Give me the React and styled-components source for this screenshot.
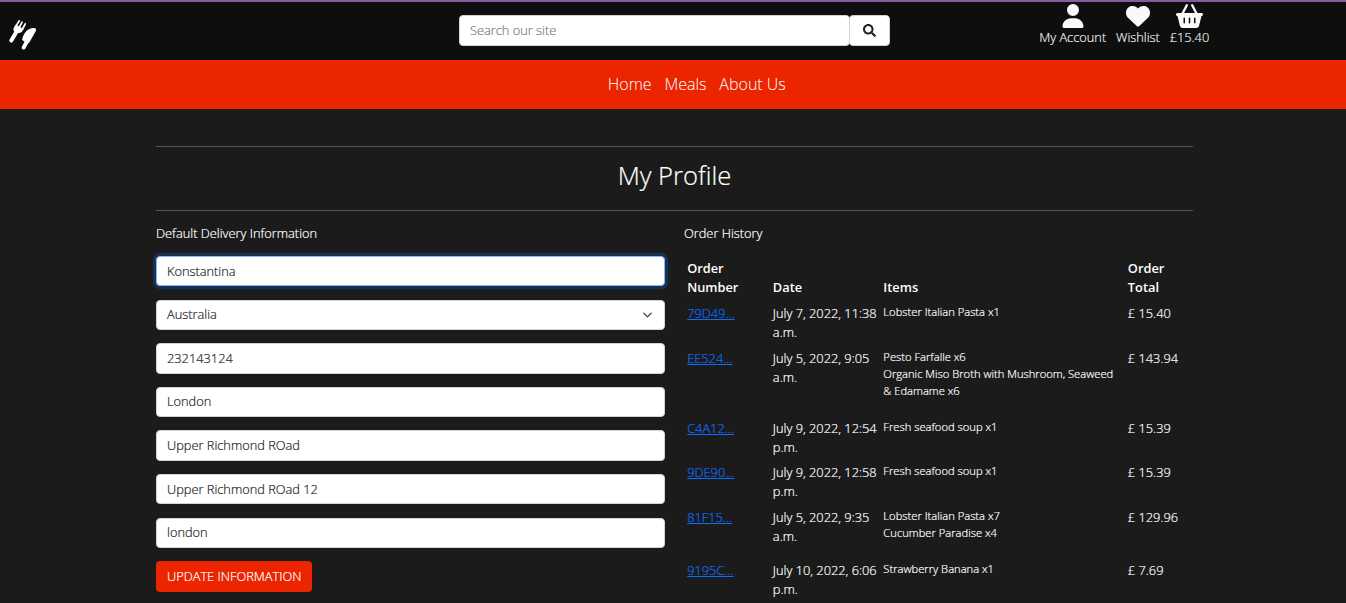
import React from "react";
import styled, { createGlobalStyle } from "styled-components";
import { FaSearch } from "react-icons/fa";
import { FaUser, FaHeart, FaBasketShopping } from "react-icons/fa6";

const Global = createGlobalStyle`
  *, *::before, *::after { box-sizing: border-box; }
  html, body { margin: 0; height: 603px; overflow: hidden; }
  body {
    background: #1b1b1b;
    color: #fff;
    font-family: "Open Sans", "Liberation Sans", sans-serif;
    font-weight: 300;
    font-size: 12.8px;
    line-height: 1.5;
  }
  input, select, button { font: inherit; }
`;

const Header = styled.header`
  display: grid;
  grid-template-columns: 459px 431px 1fr;
  height: 60px;
  border-top: 2px solid #8a5a9e;
  background: #0e0e0e;
`;
const Logo = styled.a`
  padding: 17px 0 0 8px;
  svg { display: block; }
`;
const Search = styled.form`
  display: flex;
  height: 31px;
  margin-top: 13px;
`;
const SearchInput = styled.input`
  flex: 1;
  min-width: 0;
  padding: 0 10px;
  border: 1px solid #ced4da;
  border-radius: 4px;
  background: #fff;
  color: #212529;
  outline: none;
  &::placeholder {
    color: #6c757d;
    opacity: 1;
    -webkit-text-stroke: 0.15px currentColor;
  }
`;
const SearchButton = styled.button`
  display: flex;
  align-items: center;
  justify-content: center;
  width: 41px;
  margin-left: -1px;
  padding: 0;
  border: 1px solid #ced4da;
  border-radius: 4px;
  background: #fff;
  color: #212529;
`;
const UserLinks = styled.nav`
  display: flex;
  justify-content: flex-end;
  gap: 9.8px;
  padding: 2px 136.8px 0 0;
`;
const UserLink = styled.a`
  display: flex;
  flex-direction: column;
  align-items: center;
  color: #f8f9fa;
  line-height: 19px;
  -webkit-text-stroke: 0.15px currentColor;
  svg {
    display: block;
    width: ${(p) => p.$iconWidth};
    height: 24px;
  }
`;

const MainNav = styled.nav`
  display: flex;
  justify-content: center;
  align-items: center;
  gap: 12.8px;
  height: 49px;
  padding: 0 0 2px 47.6px;
  background: #ea2500;
  font-size: 16px;
`;
const NavLink = styled.a`
  color: rgba(255, 255, 255, 0.92);
  -webkit-text-stroke: 0.15px currentColor;
`;

const Main = styled.main`
  width: 1037px;
  margin: 37px 0 0 156px;
  -webkit-text-stroke: 0.2px currentColor;
`;
const Title = styled.h1`
  height: 65px;
  margin: 0 0 13px;
  border-top: 1px solid #545454;
  border-bottom: 1px solid #545454;
  font-size: 25.6px;
  font-weight: 300;
  line-height: 57px;
  text-align: center;
`;
const Columns = styled.div`
  display: grid;
  grid-template-columns: 508.8px 508.8px;
  column-gap: 19.2px;
`;
const Caption = styled.p`
  margin: 0 0 ${(p) => p.$gap || "12.8px"};
`;
const Form = styled.form`
  display: flex;
  flex-direction: column;
  align-items: flex-start;
  gap: 13.2px;
`;
const Field = styled.div`
  display: flex;
  align-items: center;
  justify-content: space-between;
  width: 100%;
  height: 30.4px;
  padding: 0 10px;
  border: 1px solid ${(p) => (p.$focused ? "#86b7fe" : "#ced4da")};
  border-radius: 4px;
  box-shadow: ${(p) => (p.$focused ? "0 0 0 3.2px rgba(13, 110, 253, 0.25)" : "none")};
  background: #fff;
  color: #212529;
`;
const Submit = styled.button`
  height: 31px;
  padding: 0 11px;
  border: 0;
  border-radius: 4px;
  background: #ea2500;
  color: #fff;
`;

const Table = styled.table`
  width: 508.8px;
  border-collapse: collapse;
  table-layout: fixed;
`;
const Th = styled.th`
  width: ${(p) => p.$w};
  padding: 2.6px 3.2px 3.2px;
  font-weight: 600;
  line-height: 19.6px;
  text-align: left;
  vertical-align: bottom;
  -webkit-text-stroke: 0;
`;
const Td = styled.td`
  padding: 3.2px;
  vertical-align: top;
`;
const OrderLink = styled.a`
  color: #0d6efd;
  text-decoration: underline;
`;
const Items = styled.ul`
  margin: 0 0 12.8px;
  padding: 0;
  list-style: none;
  font-size: 11.2px;
`;

const fields = [
  { value: "Konstantina", focused: true },
  { value: "Australia", select: true },
  { value: "232143124" },
  { value: "London" },
  { value: "Upper Richmond ROad" },
  { value: "Upper Richmond ROad 12" },
  { value: "london" },
];

const orders = [
  { id: "79D49...", date: "July 7, 2022, 11:38 a.m.", items: ["Lobster Italian Pasta x1"], total: "15.40" },
  {
    id: "EE524...",
    date: "July 5, 2022, 9:05 a.m.",
    items: ["Pesto Farfalle x6", "Organic Miso Broth with Mushroom, Seaweed & Edamame x6"],
    total: "143.94",
  },
  { id: "C4A12...", date: "July 9, 2022, 12:54 p.m.", items: ["Fresh seafood soup x1"], total: "15.39" },
  { id: "9DE90...", date: "July 9, 2022, 12:58 p.m.", items: ["Fresh seafood soup x1"], total: "15.39" },
  {
    id: "81F15...",
    date: "July 5, 2022, 9:35 a.m.",
    items: ["Lobster Italian Pasta x7", "Cucumber Paradise x4"],
    total: "129.96",
  },
  { id: "9195C...", date: "July 10, 2022, 6:06 p.m.", items: ["Strawberry Banana x1"], total: "7.69" },
];

function CutleryLogo() {
  return (
    <svg width="29" height="32" viewBox="0 0 29 32" fill="#fff" stroke="#fff" strokeLinecap="round" strokeLinejoin="round">
      <path d="M3.3 21.6 8.8 12.3" strokeWidth="4" fill="none" />
      <path d="M6.2 9.4 7.8 6.4 14.8 10.2 13.4 12.4Q10.8 14.2 8 12.9 5.4 11.6 6.2 9.4Z" strokeWidth="1.2" />
      <path d="M7.8 7.4 11.2 1.9M11 9 14 3.2M14.6 10 17.2 4.9" strokeWidth="1.8" fill="none" />
      <path d="M15.6 28.6 19 22.4" strokeWidth="4" fill="none" />
      <path d="M27.2 9.9Q22.6 8.9 19 12.3 15.2 16.2 14.8 20.8L17 22.3 20.8 23.2 27.3 11.6Z" strokeWidth="1.2" />
    </svg>
  );
}

export default function App() {
  return (
    <>
      <Global />
      <Header>
        <Logo><CutleryLogo /></Logo>
        <Search>
          <SearchInput placeholder="Search our site" />
          <SearchButton type="button" aria-label="Search"><FaSearch size={13} /></SearchButton>
        </Search>
        <UserLinks>
          <UserLink $iconWidth="24px"><FaUser /><span>My Account</span></UserLink>
          <UserLink $iconWidth="24px"><FaHeart /><span>Wishlist</span></UserLink>
          <UserLink $iconWidth="27px"><FaBasketShopping /><span>£15.40</span></UserLink>
        </UserLinks>
      </Header>
      <MainNav>
        <NavLink>Home</NavLink>
        <NavLink>Meals</NavLink>
        <NavLink>About Us</NavLink>
      </MainNav>
      <Main>
        <Title>My Profile</Title>
        <Columns>
          <section>
            <Caption $gap="12.9px">Default Delivery Information</Caption>
            <Form>
              {fields.map((f) => (
                <Field key={f.value} $focused={f.focused}>
                  {f.value}
                  {f.select && (
                    <svg width="13" height="10" viewBox="0 0 16 16" fill="none" stroke="#343a40" strokeWidth="2" strokeLinecap="round" strokeLinejoin="round">
                      <path d="m2 5 6 6 6-6" />
                    </svg>
                  )}
                </Field>
              ))}
              <Submit type="button">UPDATE INFORMATION</Submit>
            </Form>
          </section>
          <section>
            <Caption $gap="12.9px">Order History</Caption>
            <Table>
              <thead>
                <tr>
                  <Th $w="85.7px">Order<br />Number</Th>
                  <Th $w="110.5px">Date</Th>
                  <Th $w="244.5px">Items</Th>
                  <Th>Order<br />Total</Th>
                </tr>
              </thead>
              <tbody>
                {orders.map((o) => (
                  <tr key={o.id}>
                    <Td><OrderLink>{o.id}</OrderLink></Td>
                    <Td>{o.date}</Td>
                    <Td>
                      <Items>{o.items.map((i) => <li key={i}>{i}</li>)}</Items>
                    </Td>
                    <Td>£ {o.total}</Td>
                  </tr>
                ))}
              </tbody>
            </Table>
          </section>
        </Columns>
      </Main>
    </>
  );
}
